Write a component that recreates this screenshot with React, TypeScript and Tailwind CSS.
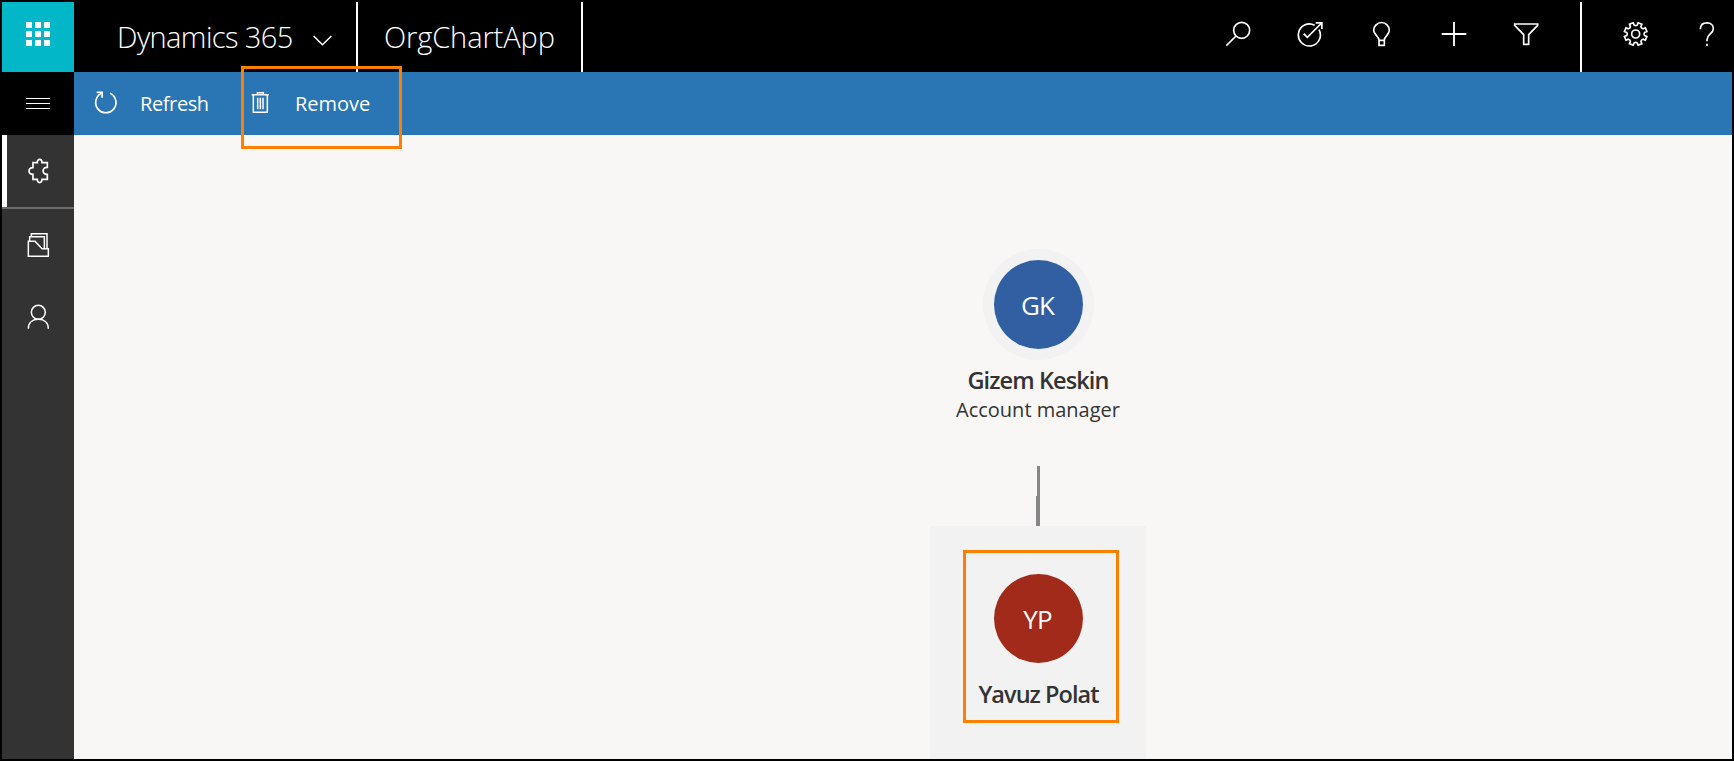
import type { ReactNode } from "react";

function Glyph({ children, width = 26, sw = 5 }: { children: ReactNode; width?: number; sw?: number }) {
  return (
    <svg
      width={width}
      height="26"
      viewBox={`0 0 ${width * 3} 78`}
      fill="none"
      stroke="currentColor"
      strokeWidth={sw}
      className="block shrink-0"
    >
      {children}
    </svg>
  );
}

const gearPath = (() => {
  const cx = 38;
  const cy = 39;
  const at = (deg: number, r: number) => {
    const a = (deg * Math.PI) / 180;
    return `${(cx + r * Math.cos(a)).toFixed(1)} ${(cy + r * Math.sin(a)).toFixed(1)}`;
  };
  let d = "";
  for (let i = 0; i < 8; i++) {
    const c = 22.5 + i * 45;
    d += `${i === 0 ? "M" : "L"}${at(c - 13, 27)} L${at(c - 10, 34.5)} L${at(c + 10, 34.5)} L${at(c + 13, 27)} Q${at(c + 22.5, 23.5)} ${at(c + 32, 27)} `;
  }
  return d + "Z";
})();

const SearchIcon = () => (
  <Glyph>
    <circle cx="50" cy="28" r="24" />
    <path d="M33 45 4 74" />
  </Glyph>
);

const GoalIcon = () => (
  <Glyph>
    <path d="M53 13A33 33 0 1 0 66 26" />
    <path d="M20 38 31 49 74 6" />
    <path d="M56 5.500H74.500V24" />
  </Glyph>
);

const BulbIcon = () => (
  <Glyph>
    <path d="M30 57C30 45 14 42 14 28A23.500 23.500 0 0 1 61 28C61 42 46 45 46 57V73H30ZM30 58H46" />
  </Glyph>
);

const PlusIcon = () => (
  <Glyph sw={5.5}>
    <path d="M2 39H76M39 3V75" />
  </Glyph>
);

const FilterIcon = () => (
  <Glyph>
    <path d="M5 9H74V13L47 41V70H32V41L5 13Z" />
  </Glyph>
);

const GearIcon = () => (
  <Glyph>
    <path d={gearPath} />
    <circle cx="38" cy="39" r="12" />
  </Glyph>
);

const HelpIcon = () => (
  <Glyph>
    <path d="M19 25C19 12 27 5.500 39 5.500C51 5.500 58 13 58 23C58 38 39 40 39 56V61M39 68V75" />
  </Glyph>
);

const PuzzleIcon = () => (
  <Glyph>
    <path d="M21 14H34C33 1 48 1 48 14H64V28C47 27 47 50 64 49V64H48C48 77 33 77 34 64H21V49C5 50 5 28 21 29Z" />
  </Glyph>
);

const FolderIcon = () => (
  <Glyph sw={4.5}>
    <path d="M4 28H24L45 50H64V73H4Z" />
    <path d="M8 28V14H52V50" />
    <path d="M13 14V5H60V50" />
  </Glyph>
);

const PersonIcon = () => (
  <Glyph sw={4.5}>
    <circle cx="34" cy="25" r="21" />
    <path d="M4 74C4 54 18 46 34 46S64 54 64 74" />
  </Glyph>
);

const RefreshIcon = () => (
  <Glyph sw={5}>
    <path d="M29 7A30.500 30.500 0 1 0 54 7" />
    <path d="M14 4H30.500V20" />
  </Glyph>
);

const TrashIcon = () => (
  <Glyph sw={4.5}>
    <path d="M14 11H66M31 10V5H49V10M19 11V64H61V11" />
    <path d="M32 20V55M40 20V55M48 20V55" />
  </Glyph>
);

function Cell({ children }: { children: ReactNode }) {
  return <div className="flex h-full w-[72px] items-center justify-center pb-1.5">{children}</div>;
}

function Avatar({ initials, color }: { initials: string; color: string }) {
  return (
    <div className={`flex h-[89px] w-[89px] items-center justify-center rounded-full text-white ${color}`}>
      <span className="pr-0.5 text-[26px] leading-8 tracking-[-0.8px]">{initials}</span>
    </div>
  );
}

function Header() {
  return (
    <header className="flex h-[70px] shrink-0 items-stretch bg-black text-white">
      <div className="flex w-[72px] items-center justify-center bg-[#02b7c7] pt-px pb-[7px]">
        <div className="grid grid-cols-3 gap-[3px]">
          {Array.from({ length: 9 }, (_, i) => (
            <span key={i} className="size-1.5 bg-white" />
          ))}
        </div>
      </div>
      <div className="flex w-[282px] items-center pl-[43px]">
        <span className="w-[196px] text-[29px] font-light leading-9 tracking-[-0.6px] whitespace-nowrap">
          Dynamics 365
        </span>
        <svg width="19" height="11" viewBox="0 0 19 11" fill="none" stroke="currentColor" strokeWidth="1.5" className="mt-1.5">
          <path d="m.6 1 8.900 8.800L18.400 1" />
        </svg>
      </div>
      <div className="w-0.5 bg-white" />
      <div className="flex w-[223px] items-center pl-[26px]">
        <span className="pb-px text-[29px] font-light leading-9 tracking-[-0.1px] whitespace-nowrap">OrgChartApp</span>
      </div>
      <div className="w-0.5 bg-white" />
      <div className="ml-auto flex items-stretch">
        <Cell><SearchIcon /></Cell>
        <Cell><GoalIcon /></Cell>
        <Cell><BulbIcon /></Cell>
        <Cell><PlusIcon /></Cell>
        <Cell><FilterIcon /></Cell>
        <div className="mr-[18px] ml-[18px] w-0.5 bg-white" />
        <Cell><GearIcon /></Cell>
        <div className="flex w-[60px] items-center pb-1.5 pl-[22px]"><HelpIcon /></div>
      </div>
    </header>
  );
}

function Sidebar() {
  return (
    <nav className="flex w-[72px] shrink-0 flex-col bg-[#333333] text-white">
      <div className="flex h-[63px] flex-col items-center justify-center gap-1 bg-black">
        <span className="h-px w-6 bg-white" />
        <span className="h-px w-6 bg-white" />
        <span className="h-px w-6 bg-white" />
      </div>
      <div className="border-b-2 border-[#6c6c6c]">
        <div className="flex h-[72px] items-center border-l-5 border-white pl-[19px]">
          <PuzzleIcon />
        </div>
      </div>
      <div className="flex h-[72px] items-center pl-[25px]"><FolderIcon /></div>
      <div className="flex h-[72px] items-center pl-[25px]"><PersonIcon /></div>
    </nav>
  );
}

function CommandBar() {
  return (
    <div className="flex h-[63px] shrink-0 items-center bg-[#2a75b3] text-white">
      <div className="flex w-[173px] items-center pl-[18px]">
        <RefreshIcon />
        <span className="ml-[22px] text-[20px] leading-7 tracking-[-0.4px] whitespace-nowrap">Refresh</span>
      </div>
      <div className="flex items-center">
        <TrashIcon />
        <span className="ml-[22px] text-[20px] leading-7 whitespace-nowrap">Remove</span>
      </div>
    </div>
  );
}

function OrgChart() {
  return (
    <main className="flex min-h-0 flex-1 flex-col items-center overflow-hidden bg-[#f8f7f6] pt-[114px] pl-[270px] text-[#333333]">
      <div className="ml-px flex h-[111px] w-[111px] shrink-0 items-center justify-center rounded-full bg-[#f2f2f2]">
        <Avatar initials="GK" color="bg-[#315fa2]" />
      </div>
      <div className="mt-1 text-[23.5px] font-semibold leading-8 tracking-[-0.9px] whitespace-nowrap">Gizem Keskin</div>
      <div className="text-[20px] leading-7 whitespace-nowrap">Account manager</div>
      <div className="mt-[42px] flex w-1 shrink-0 flex-col items-end">
        <div className="h-[30px] w-[3px] bg-[#858585]" />
        <div className="h-[30px] w-1 bg-[#858585]" />
      </div>
      <div className="flex h-[233px] w-[216px] shrink-0 flex-col items-center bg-[#f2f2f2] pt-12 pl-px">
        <Avatar initials="YP" color="bg-[#a22a1a]" />
        <div className="mt-[15px] text-[23.5px] font-semibold leading-8 tracking-[-0.95px] whitespace-nowrap">Yavuz Polat</div>
      </div>
    </main>
  );
}

export default function App() {
  return (
    <div className="relative flex h-[761px] w-[1734px] flex-col overflow-hidden border-2 border-black font-['Open_Sans','Noto_Sans',sans-serif]">
      <Header />
      <div className="flex min-h-0 flex-1">
        <Sidebar />
        <div className="flex min-w-0 flex-1 flex-col">
          <CommandBar />
          <OrgChart />
        </div>
      </div>
      <div className="absolute top-[64px] left-[239px] h-[83px] w-[161px] border-3 border-[#ff8000]" />
      <div className="absolute top-[548px] left-[961px] h-[173px] w-[156px] border-3 border-[#ff8000]" />
    </div>
  );
}
